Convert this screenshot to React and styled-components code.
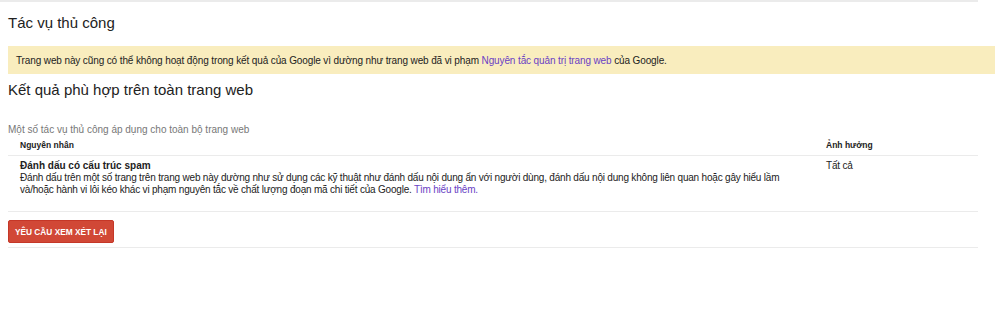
import React from 'react';
import styled, { createGlobalStyle } from 'styled-components';

const GlobalStyle = createGlobalStyle`
    body {
        margin: 0;
        background: #fff;
        font-family: "Liberation Sans", Arial, sans-serif;
        color: #222;
    }
`;

const Page = styled.div`
    padding: 0 22px 0 8px;
    width: 970px;
`;

const TopRule = styled.div`
    height: 2px;
    background: #ebebeb;
    margin-left: -8px;
    width: 978px;
`;

const Title = styled.h2`
    margin: 0;
    padding-top: 11px;
    font-size: 15px;
    font-weight: normal;
    line-height: 20px;
    color: #222;
`;

const Banner = styled.div`
    margin-top: 13px;
    margin-right: -17px;
    height: 28px;
    padding: 0 8px;
    display: flex;
    align-items: center;
    background: #f9edbe;
    font-size: 10px;
    letter-spacing: -0.12px;
    color: #222;
`;

const Link = styled.a`
    color: #6a3fc4;
    text-decoration: none;
`;

const Subtitle = styled.h3`
    margin: 6px 0 0;
    font-size: 15px;
    font-weight: normal;
    line-height: 20px;
    color: #222;
`;

const Note = styled.div`
    margin-top: 24px;
    font-size: 10px;
    line-height: 12px;
    color: #777;
`;

const Table = styled.div`
    margin-top: 3px;
    border-bottom: 1px solid #ebebeb;
`;

const Row = styled.div`
    display: grid;
    grid-template-columns: 806px 1fr;
    padding: ${p => (p.head ? '1px 12px 4px' : '4px 12px 15px')};
    border-bottom: ${p => (p.head ? '1px solid #ebebeb' : 'none')};
    font-size: ${p => (p.head ? '8.5px' : '10px')};
    line-height: ${p => (p.head ? '11px' : '12px')};
    font-weight: ${p => (p.head ? 'bold' : 'normal')};
    letter-spacing: ${p => (p.head ? '0' : '-0.2px')};
    color: #222;
`;

const Reason = styled.div`
    white-space: nowrap;
`;

const ReasonTitle = styled.div`
    font-weight: bold;
    letter-spacing: 0;
`;

const Actions = styled.div`
    padding: 8px 0 4px;
    border-bottom: 1px solid #ebebeb;
`;

const Button = styled.button`
    display: block;
    height: 23px;
    padding: 0 6px;
    border: 1px solid #c53727;
    border-radius: 2px;
    background: #d14836;
    color: #fff;
    font-family: "Liberation Sans", Arial, sans-serif;
    font-size: 8.3px;
    font-weight: bold;
    text-transform: uppercase;
`;

export default function App() {
    return (
        <>
            <GlobalStyle />
            <Page>
                <TopRule />
                <Title>Tác vụ thủ công</Title>
                <Banner>
                    <span>
                        Trang web này cũng có thể không hoạt động trong kết quả của Google vì dường như trang web đã vi phạm{' '}
                        <Link href="#">Nguyên tắc quản trị trang web</Link> của Google.
                    </span>
                </Banner>
                <Subtitle>Kết quả phù hợp trên toàn trang web</Subtitle>
                <Note>Một số tác vụ thủ công áp dụng cho toàn bộ trang web</Note>
                <Table>
                    <Row head>
                        <div>Nguyên nhân</div>
                        <div>Ảnh hưởng</div>
                    </Row>
                    <Row>
                        <Reason>
                            <ReasonTitle>Đánh dấu có cấu trúc spam</ReasonTitle>
                            Đánh dấu trên một số trang trên trang web này dường như sử dụng các kỹ thuật như đánh dấu nội dung ẩn với người dùng, đánh dấu nội dung không liên quan hoặc gây hiểu lầm
                            <br />
                            và/hoặc hành vi lôi kéo khác vi phạm nguyên tắc về chất lượng đoạn mã chi tiết của Google.{' '}
                            <Link href="#">Tìm hiểu thêm.</Link>
                        </Reason>
                        <div>Tất cả</div>
                    </Row>
                </Table>
                <Actions>
                    <Button>Yêu cầu xem xét lại</Button>
                </Actions>
            </Page>
        </>
    );
}
